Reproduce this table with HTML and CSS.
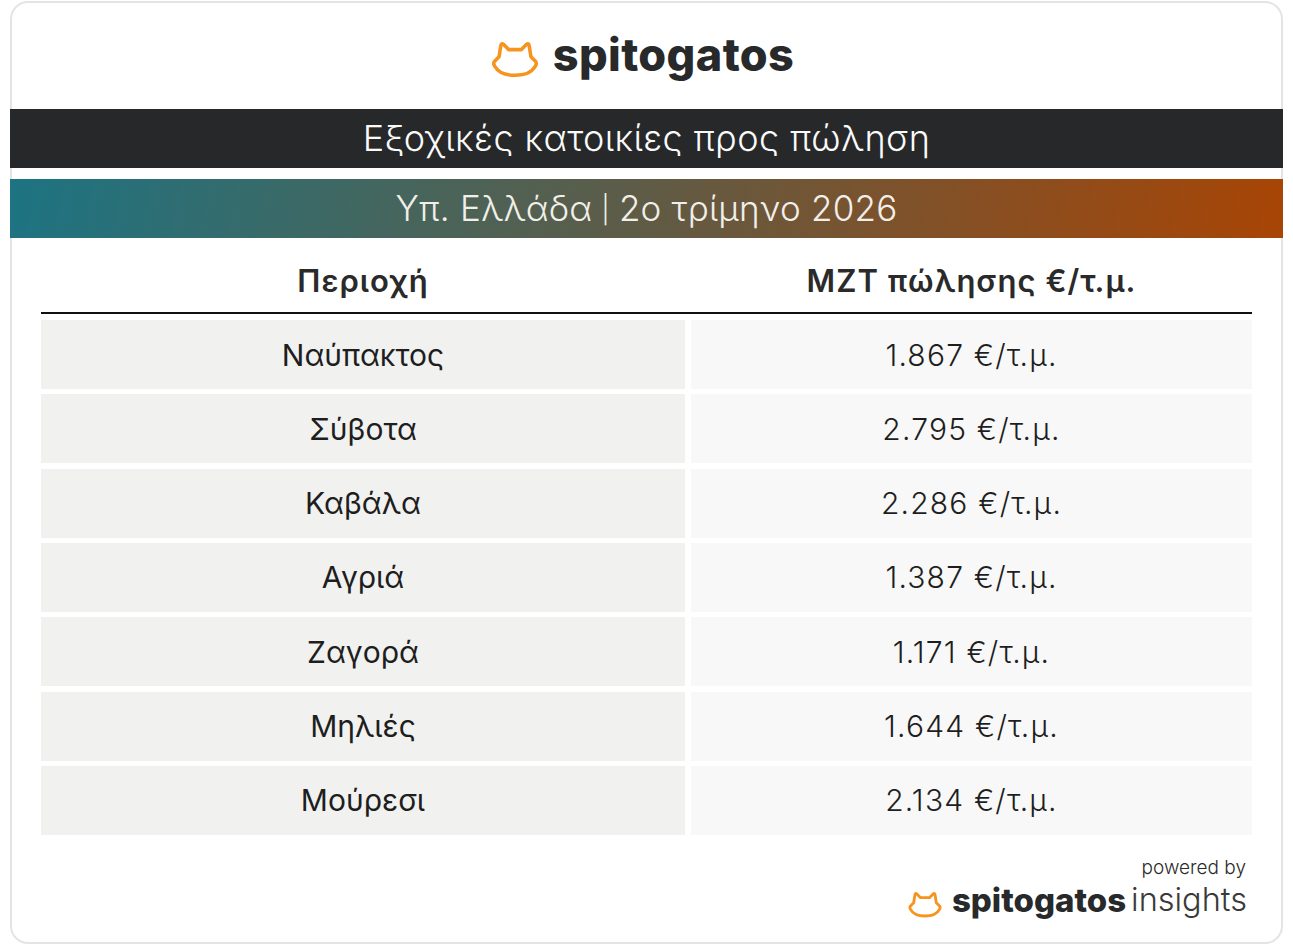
FILE: index.html
```
<!DOCTYPE html>
<html lang="el">
<head>
<meta charset="utf-8">
<title>Εξοχικές κατοικίες προς πώληση</title>
<link rel="stylesheet" href="styles.css">
</head>
<body>
<div class="card">
  <div class="brand">
    <svg class="cat" viewBox="0 0 54 44" width="48" height="39">
      <path d="M14 6 L20 12 L34 12 L40 6 Q42.5 4 43 7.5 L45 20 L50 25 Q52 27.5 50 30.5 C46 38 37 41 27 41 C17 41 8 38 4 30.5 Q2 27.5 4 25 L9 20 L11 7.5 Q11.5 4 14 6 Z" fill="none" stroke="#f7941d" stroke-width="4" stroke-linejoin="round"/>
    </svg>
    <span class="wordmark">spitogatos</span>
  </div>
  <div class="bar-title">Εξοχικές κατοικίες προς πώληση</div>
  <div class="bar-sub"><span>Υπ. Ελλάδα</span><span class="pipe">|</span><span>2ο τρίμηνο 2026</span></div>
  <div class="thead">
    <div class="th">Περιοχή</div>
    <div class="th">ΜΖΤ πώλησης €/τ.μ.</div>
  </div>
  <div class="tbody">
    <div class="td area">Ναύπακτος</div><div class="td price">1.867 €/τ.μ.</div>
    <div class="td area">Σύβοτα</div><div class="td price">2.795 €/τ.μ.</div>
    <div class="td area">Καβάλα</div><div class="td price">2.286 €/τ.μ.</div>
    <div class="td area">Αγριά</div><div class="td price">1.387 €/τ.μ.</div>
    <div class="td area">Ζαγορά</div><div class="td price">1.171 €/τ.μ.</div>
    <div class="td area">Μηλιές</div><div class="td price">1.644 €/τ.μ.</div>
    <div class="td area">Μούρεσι</div><div class="td price">2.134 €/τ.μ.</div>
  </div>
  <div class="footer">
    <div class="powered">powered by</div>
    <div class="foot-brand">
      <svg class="cat-small" viewBox="0 0 54 44" width="34" height="28">
        <path d="M14 6 L20 12 L34 12 L40 6 Q42.5 4 43 7.5 L45 20 L50 25 Q52 27.5 50 30.5 C46 38 37 41 27 41 C17 41 8 38 4 30.5 Q2 27.5 4 25 L9 20 L11 7.5 Q11.5 4 14 6 Z" fill="none" stroke="#f7941d" stroke-width="4.5" stroke-linejoin="round"/>
      </svg>
      <span class="foot-word">spitogatos</span><span class="foot-insights">insights</span>
    </div>
  </div>
</div>
</body>
</html>
```
FILE: styles.css
```
* { box-sizing: border-box; }
html, body { margin: 0; padding: 0; background: #ffffff; }
body {
  padding: 1px 10px 0 10px;
  font-family: Inter, "Noto Sans", "DejaVu Sans", sans-serif;
  color: #222;
}
.card {
  width: 1273px;
  height: 943px;
  border: 2px solid #e4e4e4;
  border-radius: 18px;
  display: flex;
  flex-direction: column;
  background: #fff;
}
.card > * { flex-shrink: 0; }
.brand {
  height: 106px;
  display: flex;
  align-items: center;
  justify-content: center;
  gap: 14px;
  padding-top: 4px;
  padding-right: 10px;
}
.cat { display: block; margin-left: 2px; }
.wordmark {
  font-size: 45px;
  font-weight: 800;
  color: #28292b;
  letter-spacing: 0.4px;
  line-height: 1;
  margin-top: -7px;
}
.bar-title {
  margin: 0 -2px;
  height: 59px;
  background: #27282a;
  color: #fafafa;
  font-size: 36px;
  font-weight: 300;
  letter-spacing: 0.4px;
  display: flex;
  align-items: center;
  justify-content: center;
  padding-bottom: 1px;
}
.bar-sub {
  margin: 11px -2px 0 -2px;
  height: 59px;
  background: linear-gradient(100deg, #1d7483 0%, #3a6a68 22%, #5c5c48 48%, #8a4e20 78%, #a84505 100%);
  color: #f1efe9;
  font-size: 35px;
  font-weight: 300;
  letter-spacing: 0.2px;
  display: flex;
  align-items: center;
  justify-content: center;
  padding-bottom: 1px;
}
.pipe {
  font-size: 27px;
  margin: 2px 9px 0 9px;
}
.thead {
  margin: 0 29px;
  height: 76px;
  display: grid;
  grid-template-columns: 644px 561px;
  column-gap: 6px;
  border-bottom: 2px solid #111;
}
.th {
  display: flex;
  align-items: center;
  justify-content: center;
  padding-top: 10px;
  font-size: 31px;
  font-weight: 600;
  letter-spacing: 1px;
  color: #2a2a2a;
}
.tbody {
  margin: 6px 29px 0 29px;
  display: grid;
  grid-template-columns: 644px 561px;
  column-gap: 6px;
  row-gap: 5.33px;
  grid-auto-rows: 69px;
}
.td {
  display: flex;
  align-items: center;
  justify-content: center;
  font-size: 30px;
  color: #1e1e1e;
}
.area { background: #f1f1f0; font-weight: 400; }
.price { background: #f8f8f8; font-weight: 300; letter-spacing: 1.2px; }
.footer {
  margin-top: auto;
  padding: 0 34px 22px 0;
  display: flex;
  flex-direction: column;
  align-items: flex-end;
}
.powered {
  font-size: 19px;
  font-weight: 300;
  color: #2a2a2a;
  line-height: 20px;
  margin-right: 1px;
}
.foot-brand {
  display: flex;
  align-items: center;
  margin-top: 8px;
  height: 34px;
}
.cat-small { display: block; margin-right: 10px; margin-top: 2px; }
.foot-word {
  font-size: 33px;
  font-weight: 800;
  color: #28292b;
  line-height: 34px;
  margin-top: -6px;
}
.foot-insights {
  font-size: 32.5px;
  font-weight: 300;
  color: #3a3a3a;
  margin-left: 5px;
  line-height: 34px;
  margin-top: -6px;
}
```
